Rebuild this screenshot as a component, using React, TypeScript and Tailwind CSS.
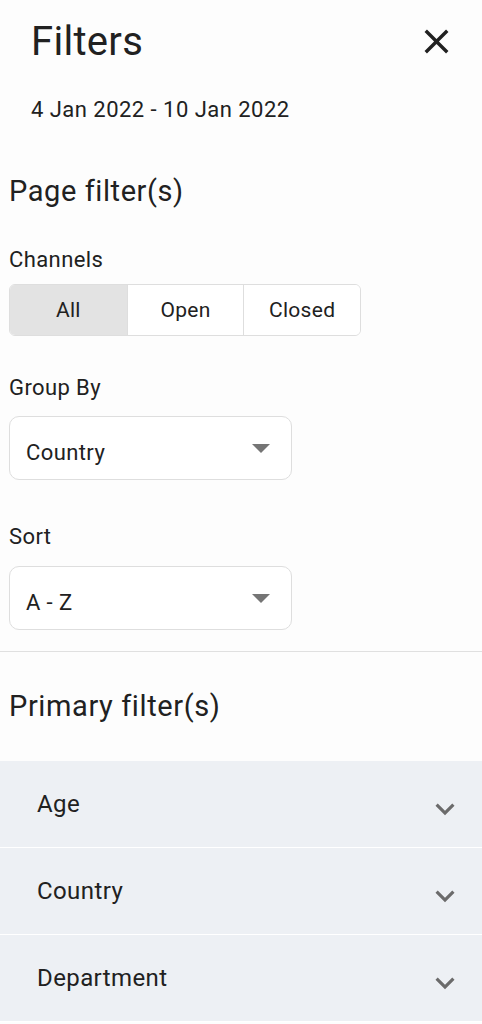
import React from 'react';

const font = { fontFamily: 'Roboto, "Noto Sans", Arial, sans-serif' };

const CloseIcon = () => (
    <svg viewBox="0 0 24 24" className="w-[41px] h-[41px] fill-[#212121]">
        <path d="M19 6.41 17.59 5 12 10.59 6.41 5 5 6.41 10.59 12 5 17.59 6.41 19 12 13.41 17.59 19 19 17.59 13.41 12z" />
    </svg>
);

const ExpandMore = () => (
    <svg viewBox="0 0 24 24" className="w-[38px] h-[38px] fill-[#6b6b6b] mt-[10px]">
        <path d="M16.59 8.59 12 13.17 7.41 8.59 6 10l6 6 6-6z" />
    </svg>
);

const DropTriangle = () => (
    <svg viewBox="0 0 18 9" className="w-[18px] h-[9px] fill-[#757575]">
        <path d="M0 0h18L9 9z" />
    </svg>
);

const SelectBox = ({ value }: { value: string }) => (
    <div className="w-[283px] h-[64px] border border-[#dedede] rounded-[10px] bg-white flex items-center justify-between pl-[16px] pr-[21px]">
        <span className="text-[22px] leading-none text-[#212121] tracking-[0.4px] mt-[10px]">{value}</span>
        <DropTriangle />
    </div>
);

const Label = ({ children, className = '' }: { children: React.ReactNode; className?: string }) => (
    <div className={`text-[22px] leading-none text-[#212121] tracking-[0.4px] pl-[9px] ${className}`}>{children}</div>
);

const AccordionRow = ({ label }: { label: string }) => (
    <div className="h-[87px] bg-[#edf0f4] border-b border-white flex items-center justify-between pl-[37px] pr-[18px]">
        <span className="text-[24px] leading-none text-[#212121] tracking-[0.4px]">{label}</span>
        <ExpandMore />
    </div>
);

export default function App() {
    const channels = ['All', 'Open', 'Closed'];

    return (
        <div className="min-h-screen bg-[#fdfdfd] overflow-hidden" style={font}>
            {/* Header */}
            <div className="flex items-center justify-between pt-[21px] pl-[31px] pr-[25px]">
                <h1 className="text-[40px] leading-none text-[#212121] tracking-[0.3px]">Filters</h1>
                <CloseIcon />
            </div>
            <div className="mt-[37px] pl-[31px] text-[22px] leading-none text-[#212121] tracking-[0.47px]">4 Jan 2022 - 10 Jan 2022</div>

            {/* Page filters */}
            <h2 className="mt-[56px] pl-[9px] text-[29px] leading-none text-[#212121] tracking-[0.58px]">Page filter(s)</h2>

            <Label className="mt-[43px]">Channels</Label>
            <div className="mt-[13px] ml-[9px] w-[352px] h-[52px] grid grid-cols-3 border border-[#dedede] rounded-[6px] overflow-hidden">
                {channels.map((c, i) => (
                    <div
                        key={c}
                        className={`flex items-center justify-center text-[21px] leading-none text-[#212121] tracking-[0.3px] ${i === 0 ? 'bg-[#e3e3e3]' : 'bg-white border-l border-[#dedede]'}`}
                    >
                        {c}
                    </div>
                ))}
            </div>

            <Label className="mt-[41px]">Group By</Label>
            <div className="mt-[17px] pl-[9px]">
                <SelectBox value="Country" />
            </div>

            <Label className="mt-[46px]">Sort</Label>
            <div className="mt-[18px] pl-[9px]">
                <SelectBox value="A - Z" />
            </div>

            <div className="mt-[21px] h-px bg-[#e0e0e0]" />

            {/* Primary filters */}
            <h2 className="mt-[40px] pl-[9px] text-[29px] leading-none text-[#212121] tracking-[0.6px]">Primary filter(s)</h2>

            <div className="mt-[40px]">
                <AccordionRow label="Age" />
                <AccordionRow label="Country" />
                <AccordionRow label="Department" />
            </div>
        </div>
    );
}
